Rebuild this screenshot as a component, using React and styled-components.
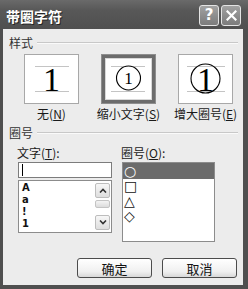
import React from 'react';
import styled, { createGlobalStyle } from 'styled-components';

const cjk = `"Noto Sans CJK SC", "Noto Sans", sans-serif`;

const Global = createGlobalStyle`
  html, body { margin: 0; padding: 0; background: #fff; }
  body { width: 248px; height: 289px; overflow: hidden; font-family: ${cjk}; }
`;

const Window = styled.div`
  width: 248px;
  height: 289px;
  box-sizing: border-box;
  display: flex;
  flex-direction: column;
  background: #4f4f4f;
`;

const TitleBar = styled.div`
  height: 29px;
  box-sizing: border-box;
  padding: 2px 7px 0 6px;
  display: flex;
  align-items: center;
  gap: 2px;
  background: linear-gradient(#6a6a6a, #585858 35%, #4f4f4f);
`;

const Title = styled.div`
  flex: 1;
  color: #fff;
  font-family: ${cjk};
  font-weight: 700;
  font-size: 14px;
  line-height: 16px;
  text-shadow: 1px 1px 0 #262626;
`;

const CaptionButton = styled.div`
  width: 20px;
  height: 21px;
  box-sizing: border-box;
  border: 1px solid #e4e4e4;
  border-radius: 3px;
  background: linear-gradient(#a2a2a2, #8a8a8a 60%, #7c7c7c);
  display: flex;
  align-items: center;
  justify-content: center;
  color: #fff;
  font-family: "DejaVu Sans", sans-serif;
  font-weight: 700;
  font-size: 15px;
  line-height: 1;
`;

const Body = styled.div`
  flex: 1;
  margin: 0 5px 4px 3px;
  background: #ececec;
  display: flex;
  flex-direction: column;
  padding: 7px 5px 7px 6px;
  color: #1a1a1a;
`;

const SectionHeader = styled.div`
  display: flex;
  align-items: center;
  gap: 4px;
  font-size: 12px;
  line-height: 14px;
  height: 14px;
  margin-top: ${p => p.$gap || 0}px;
  color: #333;
`;

const Rule = styled.div`
  flex: 1;
  height: 0;
  border-top: 1px solid #c8c8c8;
  border-bottom: 1px solid #fafafa;
`;

const StyleRow = styled.div`
  display: flex;
  gap: 22px;
  margin-top: 4px;
  padding-left: 15px;
`;

const Option = styled.div`
  width: 55px;
  display: flex;
  flex-direction: column;
  align-items: center;
`;

const PreviewBox = styled.div`
  width: 55px;
  height: 50px;
  box-sizing: border-box;
  border: 1px solid ${p => (p.$selected ? '#8e8e8e' : '#a8a8a8')};
  background: #fff;
  box-shadow: ${p => (p.$selected ? 'inset 0 0 0 3px #6c6c6c, inset 0 0 0 4px #d8d8d8' : 'none')};
  svg { display: block; }
`;

const OptionLabel = styled.div`
  margin-top: 3px;
  font-size: 12px;
  line-height: 14px;
  white-space: nowrap;
  u { text-decoration: underline; }
`;

const Panels = styled.div`
  display: flex;
  gap: 10px;
  margin-top: 6px;
  padding-left: 9px;
`;

const Column = styled.div`
  width: ${p => p.$w}px;
  display: flex;
  flex-direction: column;
`;

const ColLabel = styled.div`
  font-size: 12px;
  line-height: 14px;
  height: 14px;
  margin-bottom: 2px;
  margin-left: -1px;
  white-space: nowrap;
`;

const TextInput = styled.div`
  height: 16px;
  box-sizing: border-box;
  border: 1px solid #7c7c7c;
  background: #fff;
  display: flex;
  align-items: center;
`;

const Caret = styled.span`
  margin-left: 3px;
  width: 1px;
  height: 12px;
  background: #000;
`;

const ListBox = styled.div`
  height: ${p => p.$h}px;
  margin-top: ${p => p.$mt || 0}px;
  box-sizing: border-box;
  border: 1px solid #8c8c8c;
  background: #fff;
  display: flex;
`;

const CharItems = styled.div`
  flex: 1;
  padding: 1px 0 0 3px;
  font-family: "DejaVu Sans", sans-serif;
  font-weight: 700;
  font-size: 10px;
  line-height: 12px;
  color: #111;
`;

const ScrollBar = styled.div`
  width: 15px;
  margin-right: 1px;
  padding: 2px 0;
  display: flex;
  flex-direction: column;
`;

const ScrollButton = styled.div`
  height: 15px;
  box-sizing: border-box;
  border: 1px solid #bdbdbd;
  border-radius: 2px;
  background: linear-gradient(#f7f7f7, #dedede);
  display: flex;
  align-items: center;
  justify-content: center;
  margin-top: ${p => (p.$bottom ? 'auto' : '0')};
`;

const Thumb = styled.div`
  height: 8px;
  margin-top: 2px;
  box-sizing: border-box;
  border: 1px solid #c4c4c4;
  border-radius: 2px;
  background: linear-gradient(#f4f4f4, #dcdcdc);
`;

const ShapeList = styled.div`
  flex: 1;
  display: flex;
  flex-direction: column;
`;

const ShapeRow = styled.div`
  display: flex;
  align-items: center;
  padding-left: 1px;
  font-family: "DejaVu Sans", sans-serif;
  font-size: 14px;
  line-height: 15px;
  background: ${p => (p.$selected ? '#6b6b6b' : 'transparent')};
  color: ${p => (p.$selected ? '#fff' : '#111')};
  height: ${p => (p.$selected ? 16 : 15)}px;
`;

const ButtonRow = styled.div`
  margin-top: auto;
  display: flex;
  justify-content: flex-end;
  gap: 10px;
  padding-right: 1px;
`;

const Button = styled.div`
  width: 75px;
  height: 20px;
  box-sizing: border-box;
  border: 1px solid #4c4c4c;
  border-radius: 3px;
  background: linear-gradient(#ffffff, #f0f0f0 70%, #d8d8d8);
  display: flex;
  align-items: center;
  justify-content: center;
  font-size: 13px;
  color: #111;
`;

const Lines = ({ x1, x2 }) => (
  <>
    <line x1={x1} x2={x2} y1="11.5" y2="11.5" stroke="#c4c4c4" strokeWidth="1" />
    <line x1={x1} x2={x2} y1="36.5" y2="36.5" stroke="#c4c4c4" strokeWidth="1" />
  </>
);

const serif = '"Liberation Serif", "DejaVu Serif", serif';

const PreviewNone = () => (
  <svg width="53" height="48" viewBox="0 0 53 48">
    <Lines x1={10} x2={44} />
    <text x="26.5" y="36" textAnchor="middle" fontFamily={serif} fontSize="34" fill="#000">1</text>
  </svg>
);

const PreviewShrink = () => (
  <svg width="53" height="48" viewBox="0 0 53 48">
    <Lines x1={9} x2={43} />
    <circle cx="26.5" cy="23" r="12" fill="#fff" stroke="#000" strokeWidth="1.1" />
    <text x="26.5" y="29" textAnchor="middle" fontFamily={serif} fontSize="17" fill="#000">1</text>
  </svg>
);

const PreviewEnlarge = () => (
  <svg width="53" height="48" viewBox="0 0 53 48">
    <Lines x1={8} x2={46} />
    <circle cx="26.5" cy="23.5" r="14.5" fill="none" stroke="#000" strokeWidth="1.1" />
    <text x="26.5" y="36" textAnchor="middle" fontFamily={serif} fontSize="34" fill="#000">1</text>
  </svg>
);

const Chevron = ({ up }) => (
  <svg width="8" height="5" viewBox="0 0 8 5">
    <polyline
      points={up ? '1,4.5 4,1.5 7,4.5' : '1,0.5 4,3.5 7,0.5'}
      fill="none"
      stroke="#333"
      strokeWidth="1.6"
    />
  </svg>
);

export default function App() {
  return (
    <>
      <Global />
      <Window>
        <TitleBar>
          <Title>带圈字符</Title>
          <CaptionButton>?</CaptionButton>
          <CaptionButton>
            <svg width="11" height="11" viewBox="0 0 11 11">
              <path d="M1.5 1.5 L9.5 9.5 M9.5 1.5 L1.5 9.5" stroke="#fff" strokeWidth="2.2" strokeLinecap="square" />
            </svg>
          </CaptionButton>
        </TitleBar>
        <Body>
          <SectionHeader>
            <span>样式</span>
            <Rule />
          </SectionHeader>
          <StyleRow>
            <Option>
              <PreviewBox><PreviewNone /></PreviewBox>
              <OptionLabel>无(<u>N</u>)</OptionLabel>
            </Option>
            <Option>
              <PreviewBox $selected><PreviewShrink /></PreviewBox>
              <OptionLabel>缩小文字(<u>S</u>)</OptionLabel>
            </Option>
            <Option>
              <PreviewBox><PreviewEnlarge /></PreviewBox>
              <OptionLabel>增大圈号(<u>E</u>)</OptionLabel>
            </Option>
          </StyleRow>
          <SectionHeader $gap={5}>
            <span>圈号</span>
            <Rule />
          </SectionHeader>
          <Panels>
            <Column $w={94}>
              <ColLabel>文字(<u>T</u>):</ColLabel>
              <TextInput><Caret /></TextInput>
              <ListBox $h={53} $mt={2}>
                <CharItems>
                  <div>A</div>
                  <div>a</div>
                  <div>!</div>
                  <div>1</div>
                </CharItems>
                <ScrollBar>
                  <ScrollButton><Chevron up /></ScrollButton>
                  <Thumb />
                  <ScrollButton $bottom><Chevron /></ScrollButton>
                </ScrollBar>
              </ListBox>
            </Column>
            <Column $w={93}>
              <ColLabel>圈号(<u>O</u>):</ColLabel>
              <ListBox $h={80}>
                <ShapeList>
                  <ShapeRow $selected>○</ShapeRow>
                  <ShapeRow>□</ShapeRow>
                  <ShapeRow>△</ShapeRow>
                  <ShapeRow>◇</ShapeRow>
                </ShapeList>
              </ListBox>
            </Column>
          </Panels>
          <ButtonRow>
            <Button>确定</Button>
            <Button>取消</Button>
          </ButtonRow>
        </Body>
      </Window>
    </>
  );
}
